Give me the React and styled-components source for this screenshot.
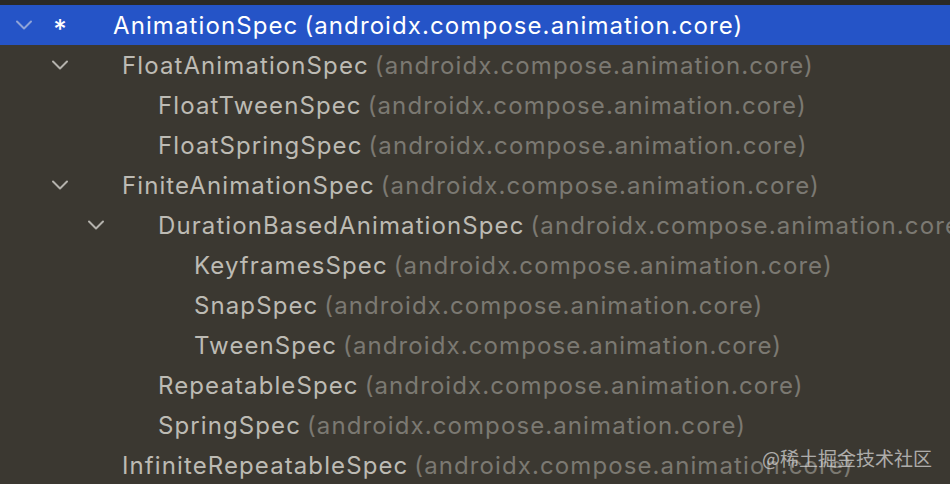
import React from "react";
import styled, { createGlobalStyle } from "styled-components";

const Global = createGlobalStyle`
html, body { margin:0; padding:0; background:#3b3831; overflow:hidden; }
`;

const Page = styled.div`
position:relative;
width:950px;
height:484px;
background:#3b3831;
font-family:Inter, "Liberation Sans", sans-serif;
overflow:hidden;
`;

const TopStrip = styled.div`
height:5px;
background:#2b2a27;
`;

const Tree = styled.div`
display:flex;
flex-direction:column;
`;

const Row = styled.div`
display:flex;
align-items:center;
height:40px;
white-space:nowrap;
background:${(p) => (p.selected ? "#2554c7" : "transparent")};
padding-left:${(p) => 6 + p.level * 36}px;
`;

const ArrowSlot = styled.div`
width:36px;
height:40px;
display:flex;
align-items:center;
justify-content:center;
flex-shrink:0;
`;

const Star = styled.div`
width:36px;
flex-shrink:0;
color:#ffffff;
font-size:26px;
font-weight:500;
text-align:center;
margin-top:6px;
`;

const Gap = styled.div`
width:${(p) => p.w}px;
flex-shrink:0;
`;

const Name = styled.span`
font-size:24px;
letter-spacing:1.1px;
color:${(p) => (p.selected ? "#ffffff" : "#bdbbb4")};
`;

const Pkg = styled.span`
font-size:24px;
letter-spacing:1.1px;
margin-left:6px;
color:${(p) => (p.selected ? "#ffffff" : "#7b7972")};
`;

const Watermark = styled.div`
position:absolute;
right:18px;
bottom:13px;
font-family:"Noto Sans CJK SC", sans-serif;
font-size:19px;
color:rgba(225,225,225,0.7);
`;

const Chevron = ({ color }) => (
  <svg width="18" height="12" viewBox="0 0 18 12">
    <path d="M2 2.5 L9 9.5 L16 2.5" fill="none" stroke={color} strokeWidth="2" strokeLinecap="round" strokeLinejoin="round" />
  </svg>
);

const PKG = "(androidx.compose.animation.core)";

const items = [
  { name: "AnimationSpec", level: 0, expanded: true, selected: true, star: true },
  { name: "FloatAnimationSpec", level: 1, expanded: true },
  { name: "FloatTweenSpec", level: 2 },
  { name: "FloatSpringSpec", level: 2 },
  { name: "FiniteAnimationSpec", level: 1, expanded: true },
  { name: "DurationBasedAnimationSpec", level: 2, expanded: true },
  { name: "KeyframesSpec", level: 3 },
  { name: "SnapSpec", level: 3 },
  { name: "TweenSpec", level: 3 },
  { name: "RepeatableSpec", level: 2 },
  { name: "SpringSpec", level: 2 },
  { name: "InfiniteRepeatableSpec", level: 1 },
];

const App = () => (
  <Page>
    <Global />
    <TopStrip />
    <Tree>
      {items.map((it) => (
        <Row key={it.name} level={it.star ? 0 : it.level - 1} selected={it.selected}>
          {it.star ? (
            <>
              <ArrowSlot><Chevron color="#8fa4d8" /></ArrowSlot>
              <Star>*</Star>
              <Gap w={35} />
            </>
          ) : (
            <>
              <Gap w={36} />
              <ArrowSlot>{it.expanded && <Chevron color="#b4b2ac" />}</ArrowSlot>
              <Gap w={44} />
            </>
          )}
          <Name selected={it.selected}>{it.name}</Name>
          <Pkg selected={it.selected}>{PKG}</Pkg>
        </Row>
      ))}
    </Tree>
    <Watermark>@稀土掘金技术社区</Watermark>
  </Page>
);

export default App;
